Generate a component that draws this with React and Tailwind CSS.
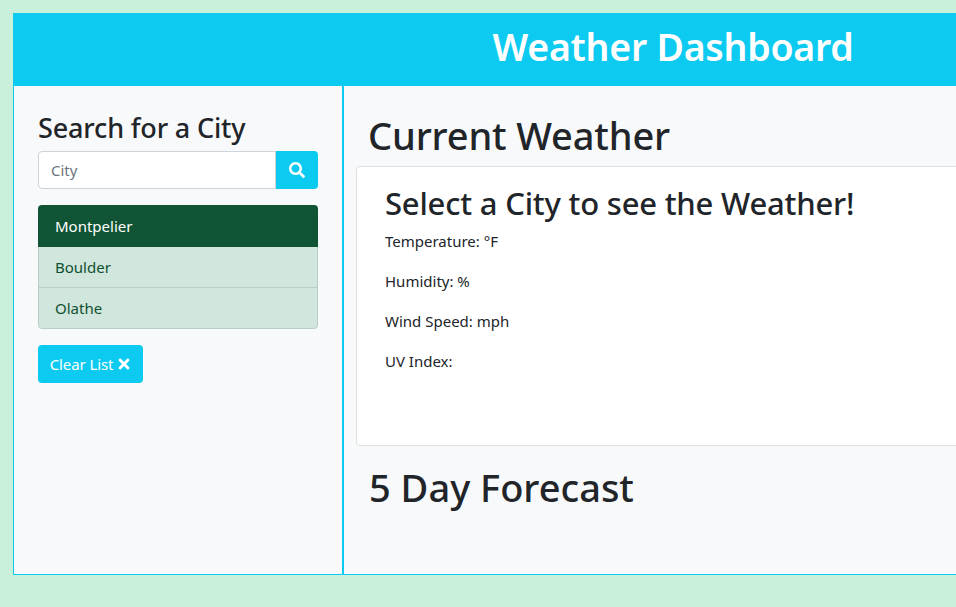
import React from "react";
import { FaSearch, FaTimes } from "react-icons/fa";

export default function App() {
  return (
    <div className="h-[607px] w-[956px] overflow-hidden bg-[#c9f0db] pt-[13px] pl-[13px] text-[#212529] [font-family:'Noto_Sans',sans-serif]">
      <div className="flex h-[562px] w-[1320px] flex-col border border-[#0dcaf0]">
        <header className="-mx-px -mt-px flex h-[73px] shrink-0 items-start justify-center bg-[#0dcaf0] pt-[15px]">
          <h1 className="text-[37.5px] leading-[38px] font-semibold tracking-[-0.25px] text-white">Weather Dashboard</h1>
        </header>
        <div className="flex min-h-0 flex-1 bg-[#f8f9fa]">
          <aside className="w-[330px] shrink-0 border-r-2 border-[#0dcaf0] px-6 pt-[23px]">
            <h2 className="h-[42px] text-[27px] leading-[38px] font-medium tracking-[-0.15px]">Search for a City</h2>
            <div className="flex h-[38px] w-[280px]">
              <div className="flex flex-1 items-center rounded-l border border-[#ced4da] bg-white px-3 text-[15px] text-[#6c757d]">City</div>
              <button className="flex w-[42px] items-center justify-center rounded-r bg-[#0dcaf0] text-white">
                <FaSearch className="text-[16px]" />
              </button>
            </div>
            <ul className="mt-4 w-[280px] overflow-hidden rounded text-[15px]">
              <li className="flex h-[42px] items-center bg-[#115335] px-[17px] text-white">Montpelier</li>
              <li className="flex h-[41px] items-center border-x border-b border-[#b9cfc5] bg-[#d1e6dc] px-4 text-[#0f5132]">Boulder</li>
              <li className="flex h-[41px] items-center rounded-b border-x border-b border-[#b9cfc5] bg-[#d1e6dc] px-4 text-[#0f5132]">Olathe</li>
            </ul>
            <button className="mt-4 flex h-[38px] w-[105px] items-center justify-center gap-[3px] rounded bg-[#0dcaf0] pl-[1px] text-[15px] tracking-[-0.1px] text-white">
              Clear List <FaTimes className="text-[16px]" />
            </button>
          </aside>
          <main className="min-w-0 flex-1 px-3 pt-[23px]">
            <h2 className="h-[57px] pl-[12px] text-[38px] leading-[52px] font-medium tracking-[-0.15px]">Current Weather</h2>
            <section className="h-[280px] rounded border border-[#dfdfdf] bg-white px-7 pt-[15px] text-[15px]">
              <h3 className="text-[31px] leading-[42px] font-medium tracking-[-0.2px]">Select a City to see the Weather!</h3>
              <p className="mt-[7px] h-10 leading-5">Temperature: °F</p>
              <p className="h-10 leading-5">Humidity: %</p>
              <p className="h-10 leading-5">Wind Speed: mph</p>
              <p className="h-10 leading-5">UV Index:</p>
            </section>
            <h2 className="mt-[15px] pl-[13px] text-[38px] leading-[52px] font-medium tracking-[0px]">5 Day Forecast</h2>
          </main>
        </div>
      </div>
    </div>
  );
}
